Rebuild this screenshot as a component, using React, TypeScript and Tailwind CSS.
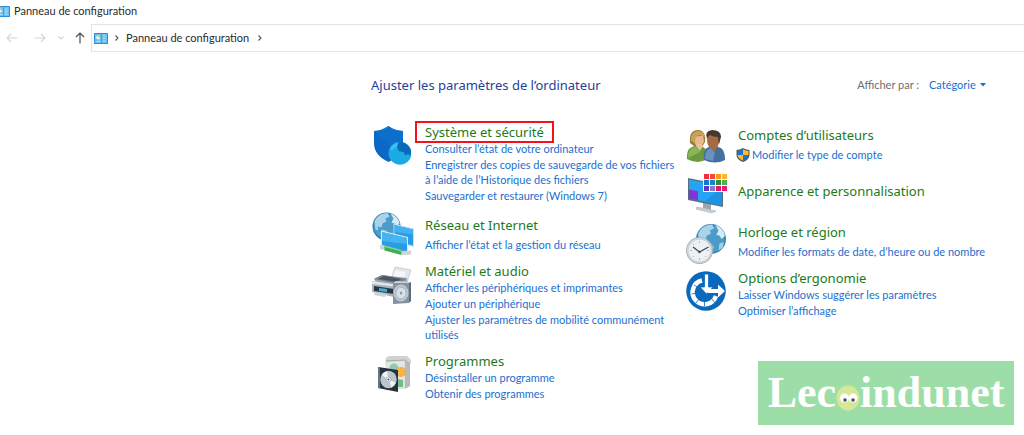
import type { ReactNode } from 'react';

function PanelIcon({ className }: { className: string }) {
  return (
    <svg viewBox="0 0 14 11" className={className} aria-hidden="true">
      <rect x="0" y="0" width="14" height="11" rx="0.6" fill="#2f8fd6" />
      <rect x="1" y="1" width="12" height="9" fill="#6cc3f3" />
      <circle cx="4.2" cy="4.4" r="2" fill="#e8f6ff" />
      <path d="M4.2 4.4V2.4a2 2 0 0 1 2 2z" fill="#f0b53c" />
      <path d="M2.5 8.4h4M9 3h2.600M9 5.4h2.600M9 8h2.600" stroke="#c4e8fb" strokeWidth="0.800" />
      <path d="M7.5 1v9" stroke="#2f8fd6" strokeWidth="0.7" />
    </svg>
  );
}

function SecurityIcon() {
  return (
    <svg viewBox="0 0 40 42" className="h-[42px] w-10" aria-hidden="true">
      <path d="M17.500 1C13 4.500 8 5.800 3 5.900V18c0 9 5.500 14.500 14.500 19C26.500 32.500 32 27 32 18V5.900C27 5.800 22 4.500 17.500 1Z" fill="#0b68c4" />
      <path d="M17.500 1C22 4.500 27 5.800 32 5.900V18c0 5-1.800 9-4.800 12.200L5 7z" fill="#0f74d2" opacity="0.6" />
      <circle cx="29" cy="28.300" r="11.400" fill="#1babe2" />
      <path d="M28 17l4 .3a11.400 11.400 0 0 1 8 13l-3-1-3 1-1-3-5-1-2-4z" fill="#0b68ba" />
      <path d="M18.500 25a11.400 11.400 0 0 1 8-7.500l-1 5-4 2z" fill="#3cc0f0" />
    </svg>
  );
}

function Globe({ cx, cy, r }: { cx: number; cy: number; r: number }) {
  return (
    <g transform={`translate(${cx} ${cy}) scale(${r / 14})`}>
      <circle r="14" fill="#3585b5" />
      <circle r="12.500" fill="#4b9cc9" />
      <path d="M-12-5C-10-10-5-13.500 1-13.500L3-10-1-8 0-5-4-3-5 1-9 0-8 4-11 3z" fill="#a9d3e8" />
      <path d="M4-13C9-11 12-8 13-3L10 0 8-3 5-4 7-8z" fill="#d5ecf5" />
      <path d="M-5 3L0 4 3 8 0 13-4 12-6 7z" fill="#93c6df" />
      <path d="M8 4l4-1-1 5-4 3z" fill="#a4d0e5" />
    </g>
  );
}

function NetworkIcon() {
  return (
    <svg viewBox="0 0 44 44" className="h-11 w-11" aria-hidden="true">
      <Globe cx={15.500} cy={14.500} r={14} />
      <path d="M22.500 11.500L43 16.500v18.500L22.500 30z" fill="#bfe2f4" />
      <path d="M23.500 13L42 17.500v16L23.500 29z" fill="#2a9ce6" />
      <path d="M23.500 13L42 17.500v5L23.500 20z" fill="#43b0f0" />
      <path d="M10 18.500L37 25v17L10 34z" fill="#d3edf9" />
      <path d="M11 20L36 26v14.500L11 33z" fill="#2a9ce6" />
      <path d="M11 20L36 26v6L11 29z" fill="#47b4f2" />
      <path d="M9 33l7 1.500v4L9 37zM31 39l9-.5v4L31 43z" fill="#cdd4d6" />
      <path d="M13.500 33.500l17 4.500v5l-17-4.500z" fill="#3fae55" />
      <path d="M13.500 33.500l17 4.500v1.500l-17-4.500z" fill="#86d494" />
    </svg>
  );
}

function PrinterIcon() {
  return (
    <svg viewBox="0 0 44 40" className="h-10 w-11" aria-hidden="true">
      <path d="M21 11L24 1l16 3-5 15-15-3z" fill="#e3e7ea" stroke="#b9c0c6" strokeWidth="0.7" />
      <path d="M24 4l11 2-3 9-11-2z" fill="#f4f6f8" />
      <path d="M3 13l8-4 25 3v8L9 23z" fill="#9aa4ae" />
      <path d="M3 13l8-4 24 4-7 5z" fill="#77828c" />
      <path d="M7 13l6-3 17 3-4 3z" fill="#4b555f" />
      <path d="M1 15l27 4v9l-5 3L1 26z" fill="#aab2bb" />
      <path d="M1 15l27 4v2L1 18z" fill="#e2e6ea" />
      <path d="M3 20l20 3v5L3 25z" fill="#283746" />
      <path d="M8 22l8 1v3l-8-1z" fill="#43acd9" />
      <path d="M4 26l12 2-2 3-11-2z" fill="#cbd2d8" />
      <path d="M22 17l3-2 15 1-2 2z" fill="#c9d3dc" />
      <path d="M22 17h16v20l-16 1z" fill="#8393a1" />
      <path d="M38 17l2-1v19l-2 2z" fill="#5e6c78" />
      <ellipse cx="30" cy="27" rx="7" ry="8" fill="#b2bec8" stroke="#d4dce2" strokeWidth="0.8" />
      <ellipse cx="30" cy="27" rx="4.500" ry="5.200" fill="#d9e0e6" />
      <ellipse cx="30" cy="27" rx="1.200" ry="1.500" fill="#8997a4" />
    </svg>
  );
}

function ProgramsIcon() {
  return (
    <svg viewBox="0 0 40 40" className="h-10 w-10" aria-hidden="true">
      <path d="M9 4L28 3v31l-19 2z" fill="#e5e7e5" stroke="#c1c4c2" strokeWidth="0.5" />
      <path d="M28 6l5 4v22l-5 3z" fill="#b7babb" />
      <path d="M9 4l3-2h18l4 4v4l-5-3L9 8z" fill="#d0d2d2" />
      <path d="M9 7l19-1 5 4" fill="none" stroke="#9ca0a2" strokeWidth="0.8" />
      <circle cx="17" cy="14" r="4.500" fill="#8fcbaa" />
      <circle cx="24" cy="18" r="5" fill="#f6a936" />
      <path d="M20 16h8M20 19h8M22 14v8M25 14v8" stroke="#fac66f" strokeWidth="0.7" />
      <path d="M20 25l6 1v7h-6z" fill="#72bc87" />
      <path d="M1 13l20 3v22L1 34z" fill="#26323e" />
      <path d="M1 13l2 .3v21L1 34z" fill="#647583" />
      <ellipse cx="11.500" cy="25.500" rx="8.200" ry="8.800" fill="#bac5cc" />
      <path d="M11.500 25.500L5 21a8 8 0 0 1 5-4zM11.500 25.500l7 3a8 8 0 0 1-4 5z" fill="#eff4f6" />
      <circle cx="11.500" cy="25.500" r="2.500" fill="#e9eef0" stroke="#8d9aa3" strokeWidth="0.6" />
      <circle cx="11.500" cy="25.500" r="0.900" fill="#42515d" />
    </svg>
  );
}

function UsersIcon() {
  return (
    <svg viewBox="0 0 40 36" className="h-9 w-10" aria-hidden="true">
      <path d="M1 31c-.5-8 2-12 8-13l8 1c4 2 5 7 4 12q-9 6-20 0z" fill="#6b9a3e" />
      <path d="M2 30c0-7 3-11 8-11l4 5z" fill="#8ab65a" />
      <path d="M4 15C3 5 7 2 12 2s8 4 7 12l-3 5-8-1z" fill="#9b7735" />
      <path d="M9 8q5 1 8-1l1 6q-1 5-5 6-4-1-5-6z" fill="#e8b88e" />
      <path d="M5 13Q4 4 12 3q6 0 7 6-5-3-8-1-2 2-2 7z" fill="#c5a459" />
      <path d="M10 18l4 5 3-5-2-2h-3z" fill="#ecc29d" />
      <path d="M18 32c-1-8 1-12 5-13h9c5 1 7 5 7 13q-10 5-21 0z" fill="#466f9e" />
      <path d="M19 31c0-7 2-10 6-11l4 5-2 8z" fill="#6a92be" />
      <path d="M24 18l4 6 4-6-2-3h-4z" fill="#a56943" />
      <path d="M21 11q0 8 5 10 7 0 8-10l-2-5H23z" fill="#a66b45" />
      <path d="M21 11Q18 3 26 2q9 0 9 7l-2 7-1-7q-5 0-8-2-2 1-3 4z" fill="#453830" />
    </svg>
  );
}

function AppearanceIcon() {
  const swatches = [
    ['#f52b38', '#f04a35', '#f69b22', '#ffb62f'],
    ['#0b78d5', '#1484cd', '#338c35', '#46b750'],
    ['#6136be', '#8c79c5', '#dd176d', '#f01876'],
  ];
  return (
    <svg viewBox="0 0 42 44" className="h-11 w-[42px]" aria-hidden="true">
      <path d="M17 32l8 2v6l-8-2z" fill="#9ca7af" />
      <path d="M11 37l14 3 5 1-4 2-16-4z" fill="#cbd1d5" stroke="#9ca7af" strokeWidth="0.5" />
      <path d="M2 8l35 7v22L2 30z" fill="#596e7d" />
      <path d="M3 9.500l33 6.500v19.500L3 28.500z" fill="#25a4f3" />
      <path d="M3 19.500l9 1.800v9L3 28.500z" fill="#8333d6" />
      <path d="M18 32L36 17v18.500z" fill="#1c93e4" />
      <rect x="17" y="3" width="25" height="19" fill="#fff" />
      {swatches.map((row, y) =>
        row.map((color, x) => (
          <rect key={color} x={18 + x * 6} y={4 + y * 6} width="5" height="5" fill={color} />
        )),
      )}
    </svg>
  );
}

function ClockIcon() {
  return (
    <svg viewBox="0 0 42 42" className="h-[42px] w-[42px]" aria-hidden="true">
      <Globe cx={25} cy={16} r={15} />
      <circle cx="13.500" cy="27.500" r="13.500" fill="#a3afb7" />
      <circle cx="13.500" cy="27.500" r="12.700" fill="#ccd4da" />
      <circle cx="13.500" cy="27.500" r="10.800" fill="#eef1f3" />
      <path d="M13.500 18v2M13.500 35v2M4 27.500h2M21 27.500h2M7 21l1 1M19 33l1 1M7 34l1-1" stroke="#a2adb5" strokeWidth="0.8" />
      <path d="M7 24l6.500 5 9-5" fill="none" stroke="#364650" strokeWidth="1.200" />
      <circle cx="13.500" cy="29" r="1.200" fill="#364650" />
    </svg>
  );
}

function AccessIcon() {
  return (
    <svg viewBox="0 0 40 40" className="h-10 w-10" aria-hidden="true">
      <circle cx="20" cy="20" r="19.800" fill="#0b69bd" />
      <path d="M16 9.500A12 12 0 1 0 30 25" fill="none" stroke="#fff" strokeWidth="4.500" />
      <path d="M8 14l4 2.500M5.500 23l5-1M10 32l3-4M18.500 30v5M26 28l3 4" stroke="#0b69bd" strokeWidth="0.800" />
      <path d="M18.500 3h4v13h4.500L20.500 23 14 16h4.500z" fill="#fff" stroke="#0b69bd" strokeWidth="0.800" />
      <path d="M22.500 18h9.500v-4.500l7 6.500-7 6.500V22H21.500z" fill="#fff" />
    </svg>
  );
}

function AdminShield() {
  return (
    <svg viewBox="0 0 14 14" className="h-3.5 w-3.5 shrink-0" aria-hidden="true">
      <path d="M7 0Q4 2 .5 2v5q0 4.500 6.500 7 6.500-2.500 6.500-7V2Q10 2 7 0z" fill="#4c5864" />
      <path d="M7 1.200Q4.500 2.800 1.500 2.900V7H7z" fill="#1976d2" />
      <path d="M7 1.200Q9.500 2.800 12.500 2.900V7H7z" fill="#fbbd2d" />
      <path d="M1.500 7H7v5.800Q2 10.500 1.500 7z" fill="#fbbd2d" />
      <path d="M12.500 7H7v5.800Q12 10.500 12.500 7z" fill="#1976d2" />
    </svg>
  );
}

function Chevron({ down = false, className }: { down?: boolean; className: string }) {
  return (
    <svg viewBox="0 0 6 6" className={className} fill="none" stroke="currentColor" strokeWidth="1.100" aria-hidden="true">
      <path d={down ? 'M.5 1.500L3 4l2.500-2.500' : 'M1.500.5L4 3 1.500 5.500'} />
    </svg>
  );
}

function NavArrow({ label, d, className }: { label: string; d: string; className: string }) {
  return (
    <button type="button" aria-label={label} className={className}>
      <svg viewBox="0 0 12 12" className="h-3 w-3" fill="none" stroke="currentColor" strokeWidth="1.200" aria-hidden="true">
        <path d={d} />
      </svg>
    </button>
  );
}

type CategoryProps = {
  icon: ReactNode;
  title: string;
  links?: string[];
  highlighted?: boolean;
  spaced?: boolean;
  shield?: boolean;
  className?: string;
};

function Category({ icon, title, links = [], highlighted, spaced, shield, className = '' }: CategoryProps) {
  return (
    <section className={`flex items-start gap-2.5 ${className}`}>
      <div className="-my-3 flex w-11 shrink-0">{icon}</div>
      <div className="min-w-0 flex-1">
        <h2 className="font-['Noto_Sans','Open_Sans',sans-serif] text-[13px] leading-[18px] text-[#1c7a21]">
          <a
            href="#"
            className={
              highlighted
                ? '-mx-2.5 -my-0.5 inline-block px-2.5 py-0.5 outline-2 -outline-offset-2 outline-[#f5101c]'
                : 'inline-block'
            }
          >
            {title}
          </a>
        </h2>
        {links.length > 0 && (
          <ul className={`flex flex-col gap-px text-[11px] leading-[15px] text-[#1a6fd0] ${spaced ? 'mt-[3px]' : ''}`}>
            {links.map((link) => (
              <li key={link} className={shield ? '-ml-0.5 flex items-center gap-0.5' : ''}>
                {shield && <AdminShield />}
                <a href="#">{link}</a>
              </li>
            ))}
          </ul>
        )}
      </div>
    </section>
  );
}

export default function App() {
  return (
    <div className="relative min-h-screen bg-white font-[Lato,'Open_Sans',sans-serif] text-[#2b2b2b]">
      <header>
        <div className="flex h-6 items-center gap-1 overflow-hidden pb-0.5 text-[11px]">
          <PanelIcon className="-ml-1 h-[11px] w-3.5" />
          <span>Panneau de configuration</span>
        </div>
        <div className="flex h-7 items-center">
          <nav className="flex w-[91px] shrink-0 items-center pl-1.5 text-[#d6d6d6]">
            <NavArrow label="Précédent" d="M11.500 6H1M5 2L1 6l4 4" className="mr-4" />
            <NavArrow label="Suivant" d="M.5 6H11M7 2l4 4-4 4" className="mr-3" />
            <button type="button" aria-label="Emplacements récents" className="mr-2.5">
              <Chevron down className="h-1.5 w-1.5" />
            </button>
            <NavArrow label="Monter" d="M6 11.500V1M2 5l4-4 4 4" className="text-[#4f4f4f]" />
          </nav>
          <div className="flex h-7 flex-1 items-center border border-r-0 border-[#e3e3e3] pl-0.5 text-[11px]">
            <PanelIcon className="h-[11px] w-3.5" />
            <Chevron className="ml-1.5 h-1.5 w-1.5 text-[#555]" />
            <span className="ml-1.5">Panneau de configuration</span>
            <Chevron className="ml-2 h-1.5 w-1.5 text-[#555]" />
          </div>
        </div>
      </header>

      <main className="pr-[23px] pl-[371px]">
        <div className="flex items-center justify-between pt-[23px] pr-[15px]">
          <h1 className="font-['Noto_Sans','Open_Sans',sans-serif] text-[13px] leading-5 text-[#1f3f9a]">
            Ajuster les paramètres de l’ordinateur
          </h1>
          <div className="flex items-center text-[11px] leading-5">
            <label htmlFor="view" className="text-[#6d6d6d]">
              Afficher par :
            </label>
            <select id="view" className="ml-2.5 appearance-none bg-transparent text-[#1a6fd0]">
              <option>Catégorie</option>
            </select>
            <svg viewBox="0 0 6 4" className="ml-1 h-1 w-1.5" aria-hidden="true">
              <path d="M0 0h6L3 3.500z" fill="#1a6fd0" />
            </svg>
          </div>
        </div>

        <div className="grid grid-cols-2 pt-7">
          <div className="flex flex-col pr-2.5">
            <Category
              icon={<div className="mt-3.5"><SecurityIcon /></div>}
              title="Système et sécurité"
              highlighted
              links={[
                'Consulter l’état de votre ordinateur',
                'Enregistrer des copies de sauvegarde de vos fichiers à l’aide de l’Historique des fichiers',
                'Sauvegarder et restaurer (Windows 7)',
              ]}
            />
            <Category
              className="mt-[13px]"
              icon={<div className="mt-2"><NetworkIcon /></div>}
              title="Réseau et Internet"
              spaced
              links={['Afficher l’état et la gestion du réseau']}
            />
            <Category
              className="mt-2.5"
              icon={<div className="mt-4"><PrinterIcon /></div>}
              title="Matériel et audio"
              links={[
                'Afficher les périphériques et imprimantes',
                'Ajouter un périphérique',
                'Ajuster les paramètres de mobilité communément utilisés',
              ]}
            />
            <Category
              className="mt-2.5"
              icon={<div className="mt-3.5 ml-1.5"><ProgramsIcon /></div>}
              title="Programmes"
              links={['Désinstaller un programme', 'Obtenir des programmes']}
            />
          </div>

          <div className="-ml-0.5 flex flex-col pt-[3px]">
            <Category
              icon={<div className="mt-3.5 ml-0.5"><UsersIcon /></div>}
              title="Comptes d’utilisateurs"
              spaced
              shield
              links={['Modifier le type de compte']}
            />
            <Category
              className="mt-5"
              icon={<div className="ml-0.5"><AppearanceIcon /></div>}
              title="Apparence et personnalisation"
            />
            <Category
              className="mt-[21px]"
              icon={<div className="mt-3 ml-0.5"><ClockIcon /></div>}
              title="Horloge et région"
              spaced
              links={['Modifier les formats de date, d’heure ou de nombre']}
            />
            <Category
              className="mt-2.5"
              icon={<div className="mt-3.5 ml-0.5"><AccessIcon /></div>}
              title="Options d’ergonomie"
              links={['Laisser Windows suggérer les paramètres', 'Optimiser l’affichage']}
            />
          </div>
        </div>
      </main>

      <div className="absolute right-2.5 bottom-2.5 flex h-16 w-64 items-center justify-center bg-[#9ddea8] font-['Liberation_Serif',serif] text-[44px] leading-none font-bold text-white">
        <span>Lec</span>
        <svg viewBox="0 0 24 26" className="mt-2.5 h-[26px] w-6" role="img" aria-label="o">
          <ellipse cx="12" cy="13" rx="11.500" ry="12.500" fill="#d5e897" />
          <circle cx="8.500" cy="13" r="4.500" fill="#fff" />
          <circle cx="17" cy="13" r="4.500" fill="#fff" />
          <circle cx="9" cy="15" r="1.800" fill="#505158" />
          <circle cx="17" cy="15" r="1.800" fill="#505158" />
        </svg>
        <span>indunet</span>
      </div>
    </div>
  );
}
